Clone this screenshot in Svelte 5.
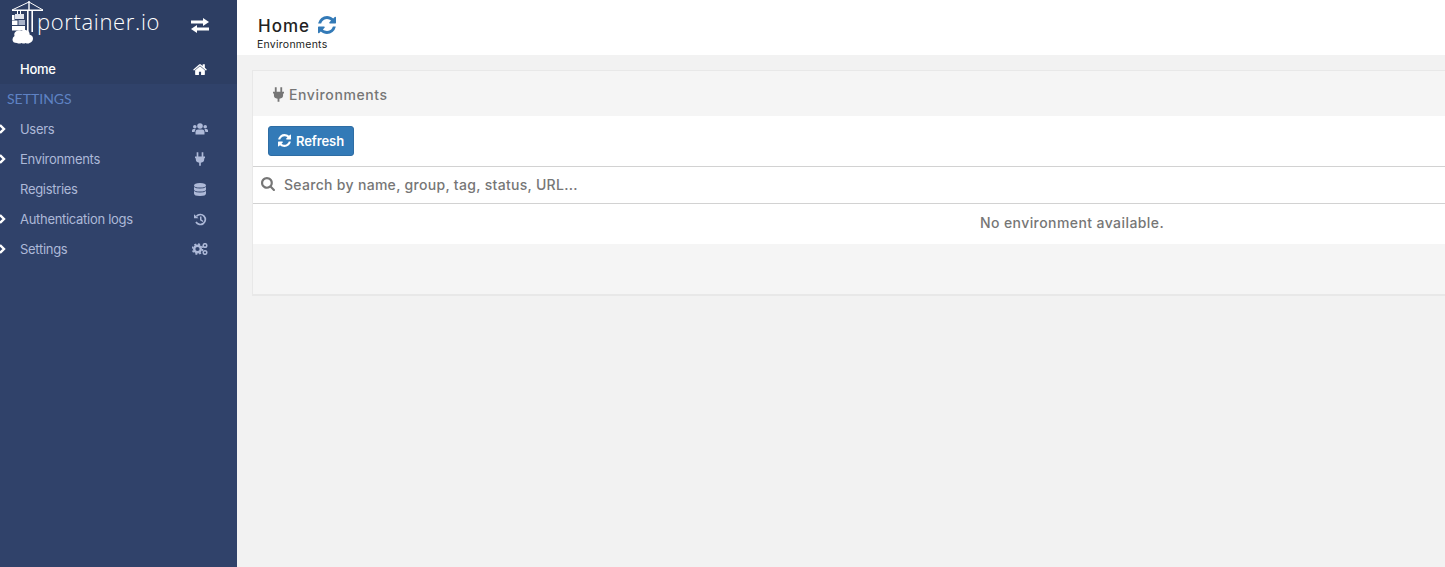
<script>
  const refreshPath = "M1511 928q0 5-1 7-64 268-268 434.5t-478 166.5q-146 0-282.5-55t-243.5-157l-129 129q-19 19-45 19t-45-19-19-45v-448q0-26 19-45t45-19h448q26 0 45 19t19 45-19 45l-137 137q71 66 161 102t187 36q134 0 250-65t186-179q11-17 53-117 8-23 30-23h192q13 0 22.5 9.5t9.5 22.5zm25-800v448q0 26-19 45t-45 19h-448q-26 0-45-19t-19-45 19-45l138-138q-148-137-349-137-134 0-250 65t-186 179q-11 17-53 117-8 23-30 23h-199q-13 0-22.5-9.5t-9.5-22.5v-7q65-268 270-434.5t480-166.5q146 0 284 55.5t245 156.5l130-129q19-19 45-19t45 19 19 45z";
  const plugPath = "M2 0h2v5H2zM8 0h2v5H8zM0 5h12v2h-1v2q0 3-4 3.500V16H5v-3.500Q1 12 1 9V7H0z";

  const items = [
    { label: "Users", arrow: true, icon: "users" },
    { label: "Environments", arrow: true, icon: "plug" },
    { label: "Registries", arrow: false, icon: "database" },
    { label: "Authentication logs", arrow: true, icon: "history" },
    { label: "Settings", arrow: true, icon: "cogs" },
  ];
</script>

<div class="layout">
  <aside class="sidebar">
    <div class="top">
      <div class="brand">
        <div class="logo">
          <svg class="crane" viewBox="0 0 32 44" width="32" height="44">
            <path d="M0 10 17 2l14 8" fill="none" stroke="#fff" stroke-width="1" />
            <path d="M0 9.500h31v1.500H0zM16.300 1h1.400v9h-1.400zM15 11h1.600v21H15zM19.400 11H21v21h-1.600z" fill="#fff" />
            <path d="M5 11h1v3H5zM8 11h1v3H8z" fill="#fff" />
            <rect x="3" y="14" width="9" height="5" fill="#dfe3ec" />
            <rect x="0" y="15" width="2.500" height="5" fill="#fff" />
            <rect x="0" y="20.500" width="5.500" height="4.500" fill="#fff" />
            <rect x="6.500" y="20" width="6.500" height="5" fill="#aab4ca" />
            <rect x="0" y="26" width="13" height="4.500" fill="#fff" />
            <path d="M5 43q-4.500 0-4.500-3.500 0-2.500 2-3.500-1-3.500 2-5 3-1.500 5 0 2.500-2 5.500-.5 3 1.500 2.500 4 3.500 1 3.500 4T17.500 43q-1.500 1-4 0-1.500 1-4 0-2.500 1-4.500 0z" fill="#fff" />
          </svg>
          <span class="wordmark">portainer.io</span>
        </div>
        <svg class="toggle" viewBox="0 0 18 15" width="18" height="15">
          <path d="M0 2.500h12V0l6 4-6 4V5.500H0zM18 9.500v3H6V15l-6-4 6-4v2.500z" fill="#fff" />
        </svg>
      </div>
      <div class="nav-row home-row">
        <span class="nav-label">Home</span>
        <span class="icon-slot">
          <svg viewBox="0 128 1664 1408" width="14" height="12">
            <path fill="#fff" d="M1408 992v480q0 26-19 45t-45 19h-384v-384h-256v384h-384q-26 0-45-19t-19-45v-480q0-1 .5-3t.5-3l575-474 575 474q1 2 1 6zm223-69l-62 74q-8 9-21 11h-3q-13 0-21-7l-692-577-692 577q-12 8-24 7-13-2-21-11l-62-74q-8-10-7-23.5t11-21.5l719-599q32-26 76-26t76 26l244 204v-195q0-14 9-23t23-9h192q14 0 23 9t9 23v408l219 182q10 8 11 21.5t-7 23.5z" />
          </svg>
        </span>
      </div>
    </div>

    <div class="section-title">SETTINGS</div>

    {#each items as item}
      <div class="nav-row">
        {#if item.arrow}
          <svg class="chevron" viewBox="0 0 7 10" width="7" height="10">
            <path d="M0 1 4 5 0 9" fill="none" stroke="#fff" stroke-width="2.400" />
          </svg>
        {/if}
        <span class="nav-label">{item.label}</span>
        <span class="icon-slot">
          {#if item.icon === "users"}
            <svg viewBox="0 0 16 12" width="16" height="12">
              <circle cx="8" cy="3" r="2.800" /><circle cx="2.800" cy="3.800" r="1.800" /><circle cx="13.200" cy="3.800" r="1.800" />
              <path d="M3.500 11.500V9q0-2.500 2.500-2.500h4Q12.500 6.500 12.500 9v2.500zM0 9V7.500Q0 6 1.500 6H3.500L2.500 9zM16 9V7.500Q16 6 14.500 6H12.500l1 3z" />
            </svg>
          {:else if item.icon === "plug"}
            <svg viewBox="0 0 12 16" width="10" height="14"><path d={plugPath} /></svg>
          {:else if item.icon === "database"}
            <svg viewBox="0 0 12 13" width="12" height="13">
              <path d="M0 2.500Q0 0 6 0t6 2.500Q12 4.500 6 4.500T0 2.500zM0 4q2 1.500 6 1.500T12 4v2.500Q12 8.500 6 8.500T0 6.500zM0 8q2 1.500 6 1.500T12 8v2.500Q12 13 6 13T0 10.500z" />
            </svg>
          {:else if item.icon === "history"}
            <svg viewBox="0 0 13 13" width="13" height="13">
              <path d="M2.500 3.300A5 5 0 1 1 2 9" fill="none" stroke="#adb9d8" stroke-width="1.700" />
              <path d="M0 1.200 4.500 5.200H0zM6 3.500h1.500v3l2 1.500-.8 1L6 7.200z" />
            </svg>
          {:else}
            <svg viewBox="0 0 16 12" width="16" height="12">
              <circle cx="5.500" cy="6" r="3.300" fill="none" stroke="#adb9d8" stroke-width="2.400" />
              <circle cx="5.500" cy="6" r="5" fill="none" stroke="#adb9d8" stroke-width="1.600" stroke-dasharray="2 1.930" />
              <circle cx="13" cy="2.500" r="1.800" fill="none" stroke="#adb9d8" stroke-width="1.500" />
              <circle cx="13" cy="9.500" r="1.800" fill="none" stroke="#adb9d8" stroke-width="1.500" />
            </svg>
          {/if}
        </span>
      </div>
    {/each}
  </aside>

  <main class="main">
    <header class="page-header">
      <div class="title-line">
        <span class="title">Home</span>
        <svg class="title-refresh" viewBox="0 0 1536 1536" width="18" height="18"><path fill="#337ab7" d={refreshPath} /></svg>
      </div>
      <div class="crumb">Environments</div>
    </header>

    <section class="content">
      <div class="panel">
        <div class="panel-head">
          <svg viewBox="0 0 12 16" width="11" height="15"><path fill="#767676" d={plugPath} /></svg>
          <span>Environments</span>
        </div>
        <div class="actions">
          <button class="refresh">
            <svg viewBox="0 0 1536 1536" width="13" height="13"><path fill="#fff" d={refreshPath} /></svg>
            Refresh
          </button>
        </div>
        <div class="search">
          <svg viewBox="0 0 1664 1664" width="14" height="14">
            <path fill="#767676" d="M1152 704q0-185-131.500-316.500t-316.500-131.500-316.500 131.500-131.500 316.500 131.500 316.500 316.500 131.500 316.500-131.500 131.500-316.500zm512 832q0 52-38 90t-90 38q-54 0-90-38l-343-342q-179 124-399 124-143 0-273.500-55.500t-225-150-150-225-55.500-273.500 55.500-273.500 150-225 225-150 273.500-55.500 273.500 55.500 225 150 150 225 55.500 273.500q0 220-124 399l343 343q37 37 37 90z" />
          </svg>
          <input placeholder="Search by name, group, tag, status, URL..." />
        </div>
        <div class="empty">No environment available.</div>
        <div class="panel-foot"></div>
      </div>
    </section>
  </main>
</div>

<style>
  :global(body) {
    background: #f2f2f2;
    overflow: hidden;
  }

  .layout {
    display: flex;
    height: 567px;
    font-family: Inter, "Open Sans", sans-serif;
    font-size: 13px;
    overflow: hidden;
  }

  .sidebar {
    flex: 0 0 237px;
    background: #30426a;
  }

  .top {
    background: #2d3e63;
  }

  .brand {
    display: flex;
    align-items: flex-start;
    justify-content: space-between;
    height: 54px;
    padding: 0 28px 0 12px;
  }

  .logo {
    display: flex;
    align-items: flex-start;
  }

  .wordmark {
    margin: 8px 0 0 -7px;
    font-family: "Open Sans", sans-serif;
    font-size: 22px;
    font-weight: 300;
    line-height: 26px;
    color: #fff;
    letter-spacing: 0.65px;
  }

  .toggle {
    margin-top: 18px;
  }

  .nav-row {
    position: relative;
    display: flex;
    align-items: center;
    justify-content: space-between;
    height: 30px;
    padding: 0 28px 0 20px;
    color: #adb9d8;
    font-size: 13px;
  }

  .home-row {
    color: #fff;
    font-weight: 500;
  }

  .nav-label {
    letter-spacing: -0.3px;
  }

  .icon-slot {
    display: flex;
    justify-content: center;
    width: 18px;
    fill: #adb9d8;
  }

  .chevron {
    position: absolute;
    left: 0;
    top: 10px;
  }

  .section-title {
    height: 30px;
    padding-left: 7px;
    line-height: 30px;
    font-family: Lato, sans-serif;
    font-size: 14px;
    color: #5f82c4;
  }

  .main {
    flex: 1;
    min-width: 0;
    overflow: hidden;
  }

  .page-header {
    height: 55px;
    padding: 16px 0 0 20px;
    box-sizing: border-box;
    background: #fff;
    color: #222;
  }

  .title-line {
    display: flex;
    align-items: center;
    gap: 8px;
    height: 20px;
  }

  .title {
    margin-left: 1px;
    font-size: 17px;
    font-weight: 500;
    letter-spacing: 1px;
  }

  .title-refresh {
    margin-top: -2px;
  }

  .crumb {
    margin-top: 2px;
    font-size: 10.5px;
    line-height: 13px;
    letter-spacing: 0.25px;
  }

  .content {
    padding: 15px;
  }

  .panel {
    width: 1639px;
    background: #fff;
    border-top: 1px solid #e8e8e8;
    border-left: 1px solid #e8e8e8;
    border-bottom: 2px solid #e8e8e8;
    box-sizing: border-box;
    color: #767676;
  }

  .panel-head {
    display: flex;
    align-items: center;
    gap: 5px;
    height: 45px;
    padding: 1px 0 0 20px;
    box-sizing: border-box;
    background: #f5f5f5;
    font-size: 14px;
    font-weight: 500;
    letter-spacing: 0.6px;
  }

  .actions {
    height: 51px;
    padding: 10px 15px 0;
    box-sizing: border-box;
    border-bottom: 1px solid #d2d2d2;
  }

  .refresh {
    display: flex;
    align-items: center;
    justify-content: center;
    gap: 5px;
    width: 86px;
    height: 30px;
    padding: 0 0 1px;
    background: #337ab7;
    border: 1px solid #2e6da4;
    border-radius: 3px;
    color: #fff;
    font: 600 13px Inter, sans-serif;
    letter-spacing: -0.1px;
  }

  .search {
    display: flex;
    align-items: center;
    gap: 9px;
    height: 37px;
    padding: 0 0 2px 8px;
    box-sizing: border-box;
    border-bottom: 1px solid #d2d2d2;
  }

  .search input {
    flex: 1;
    border: 0;
    outline: 0;
    padding: 0;
    background: transparent;
    font: 500 14px Inter, sans-serif;
    letter-spacing: 0.3px;
  }

  .search input::placeholder {
    color: #767676;
    opacity: 1;
  }

  .empty {
    height: 40px;
    line-height: 38px;
    text-align: center;
    font-size: 14px;
    font-weight: 500;
    letter-spacing: 0.42px;
  }

  .panel-foot {
    height: 50px;
    background: #f5f5f5;
  }
</style>
